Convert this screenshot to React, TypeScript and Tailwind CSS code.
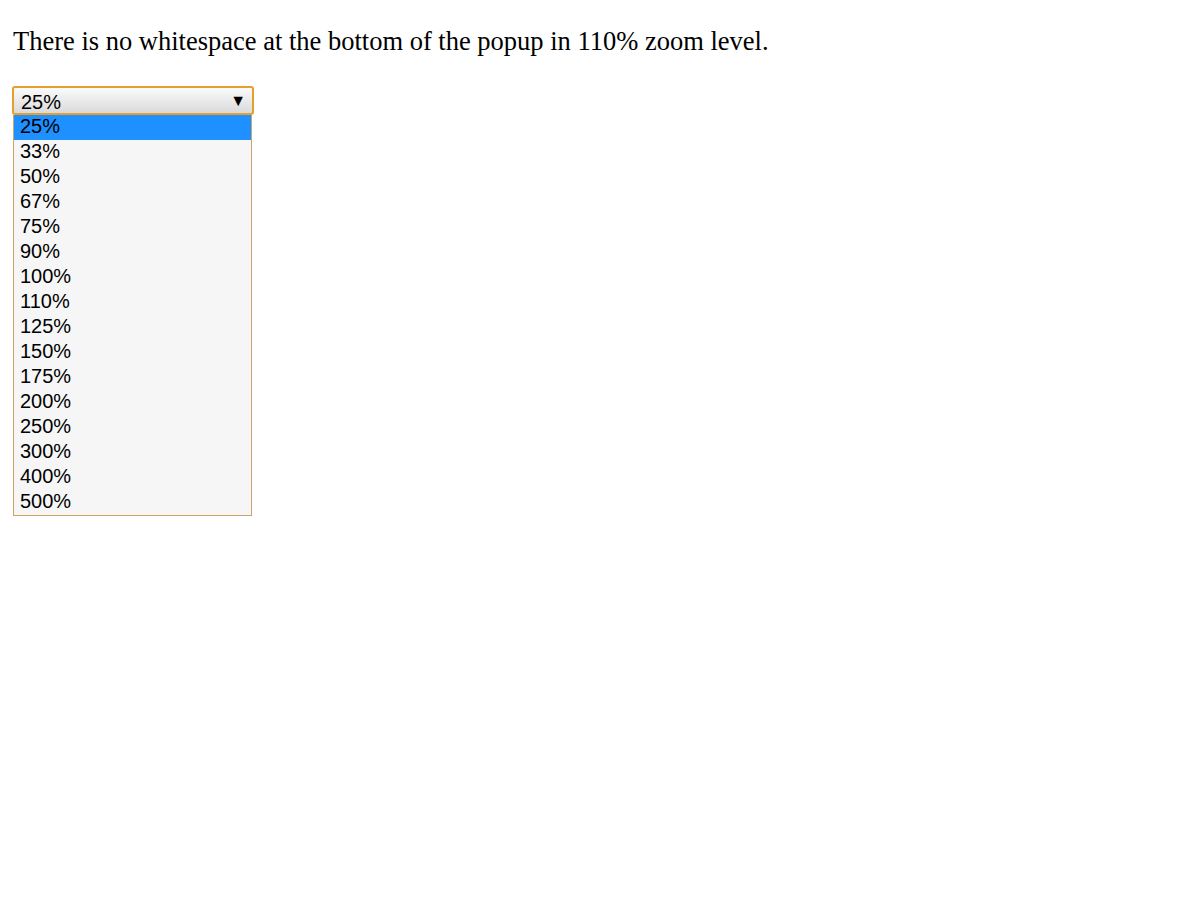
const OPTIONS = ["25%", "33%", "50%", "67%", "75%", "90%", "100%", "110%", "125%", "150%", "175%", "200%", "250%", "300%", "400%", "500%"];

export default function App() {
  const selected = "25%";
  return (
    <div className="min-h-[900px] bg-white px-[13px] pt-[24px] text-black">
      <p className="font-['Liberation_Serif',serif] text-[26.5px] leading-[34px]">
        There is no whitespace at the bottom of the popup in 110% zoom level.
      </p>

      <div className="mt-[28px] w-[241px] font-['Liberation_Sans',Arial,sans-serif] text-[20px]">
        {/* closed select face */}
        <div className="-ml-px flex h-[29px] w-[242px] items-center justify-between rounded-[3px] border-2 border-[#e6a02a] bg-gradient-to-b from-[#fbfbfb] to-[#dadada] pl-[7px] pr-[6px]">
          <span className="leading-none pt-[2px]">{selected}</span>
          <span className="text-[16px] leading-none">▼</span>
        </div>

        {/* popup list */}
        <div className="w-[239px] border border-[#c9a66c] border-t-0 bg-[#f6f6f6]">
          {OPTIONS.map((o) => (
            <div
              key={o}
              className={
                o === selected
                  ? "h-[25px] bg-[#1e90ff] pl-[6px] leading-[23px]"
                  : "h-[25px] pl-[6px] leading-[23px]"
              }
            >
              {o}
            </div>
          ))}
        </div>
      </div>
    </div>
  );
}
